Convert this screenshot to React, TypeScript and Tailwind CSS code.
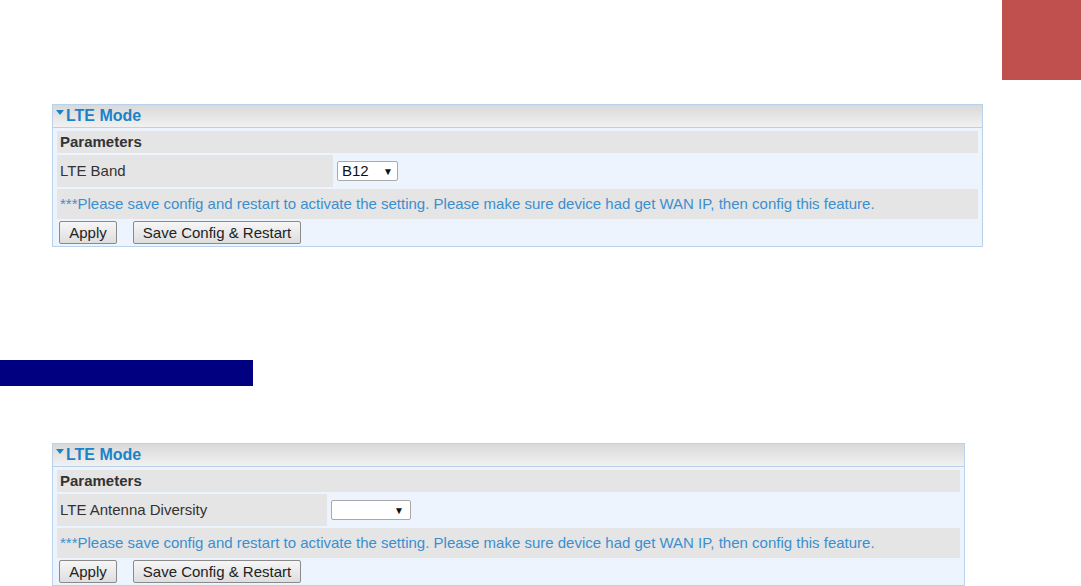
import React from 'react';

interface LtePanelProps {
  width: string;
  labelWidth: string;
  label: string;
  select: React.ReactNode;
}

function LtePanel({ width, labelWidth, label, select }: LtePanelProps) {
  return (
    <div className={`${width} border border-[#b9d1ea] bg-[#edf4fd] font-['Liberation_Sans',Arial,sans-serif]`}>
      <div className="flex h-[23px] items-center border-b border-[#b9d1ea] bg-gradient-to-b from-[#d9d9d9] to-[#f1f1f1] pl-[3px] text-[16px] font-bold text-[#1b82c8]">
        <span className="mr-[2px] mb-[7px] h-0 w-0 border-x-[4px] border-t-[5px] border-x-transparent border-t-[#1b82c8]" />
        LTE Mode
      </div>
      <div className="flex flex-col gap-[2px] px-[4px] pt-[3px] pb-[2px]">
        <div className="flex h-[22px] items-center bg-[#e5e5e5] pl-[3px] text-[15px] font-bold text-[#333]">
          Parameters
        </div>
        <div className="flex h-[32px] items-stretch">
          <div className={`${labelWidth} flex items-center bg-[#e5e5e5] pl-[3px] text-[15px] text-[#333]`}>{label}</div>
          <div className="flex items-center pl-[4px]">{select}</div>
        </div>
        <div className="flex h-[30px] items-center bg-[#e5e5e5] pl-[3px] text-[15px] text-[#3b8fd0]">
          ***Please save config and restart to activate the setting. Please make sure device had get WAN IP, then config this feature.
        </div>
        <div className="flex h-[23px] items-center gap-[16px] pl-[2px]">
          <button className="h-[23px] w-[58px] rounded-[2px] border border-[#8a8a8a] bg-gradient-to-b from-[#f6f6f6] to-[#dedede] text-[15px] text-[#222]">
            Apply
          </button>
          <button className="h-[23px] w-[168px] rounded-[2px] border border-[#8a8a8a] bg-gradient-to-b from-[#f6f6f6] to-[#dedede] text-[15px] text-[#222]">
            Save Config &amp; Restart
          </button>
        </div>
      </div>
    </div>
  );
}

export default function App() {
  return (
    <div className="flex h-[586px] w-[1081px] flex-col bg-white">
      <div className="flex justify-end">
        <div className="h-[80px] w-[79px] bg-[#c0504d]" />
      </div>
      <div className="mt-[24px] ml-[52px]">
        <LtePanel
          width="w-[931px]"
          labelWidth="w-[276px]"
          label="LTE Band"
          select={
            <div className="flex h-[20px] w-[61px] items-center justify-between rounded-[2px] border border-[#a9a9a9] bg-white px-[4px] text-[15px] text-[#111]">
              <span>B12</span>
              <span className="text-[10px]">▼</span>
            </div>
          }
        />
      </div>
      <div className="mt-[113px] h-[27px] w-[253px] bg-[#000080]" />
      <div className="mt-[57px] ml-[52px]">
        <LtePanel
          width="w-[913px]"
          labelWidth="w-[270px]"
          label="LTE Antenna Diversity"
          select={
            <div className="flex h-[20px] w-[80px] items-center justify-end rounded-[2px] border border-[#a9a9a9] bg-white px-[6px] text-[15px] text-[#111]">
              <span className="text-[10px]">▼</span>
            </div>
          }
        />
      </div>
    </div>
  );
}
